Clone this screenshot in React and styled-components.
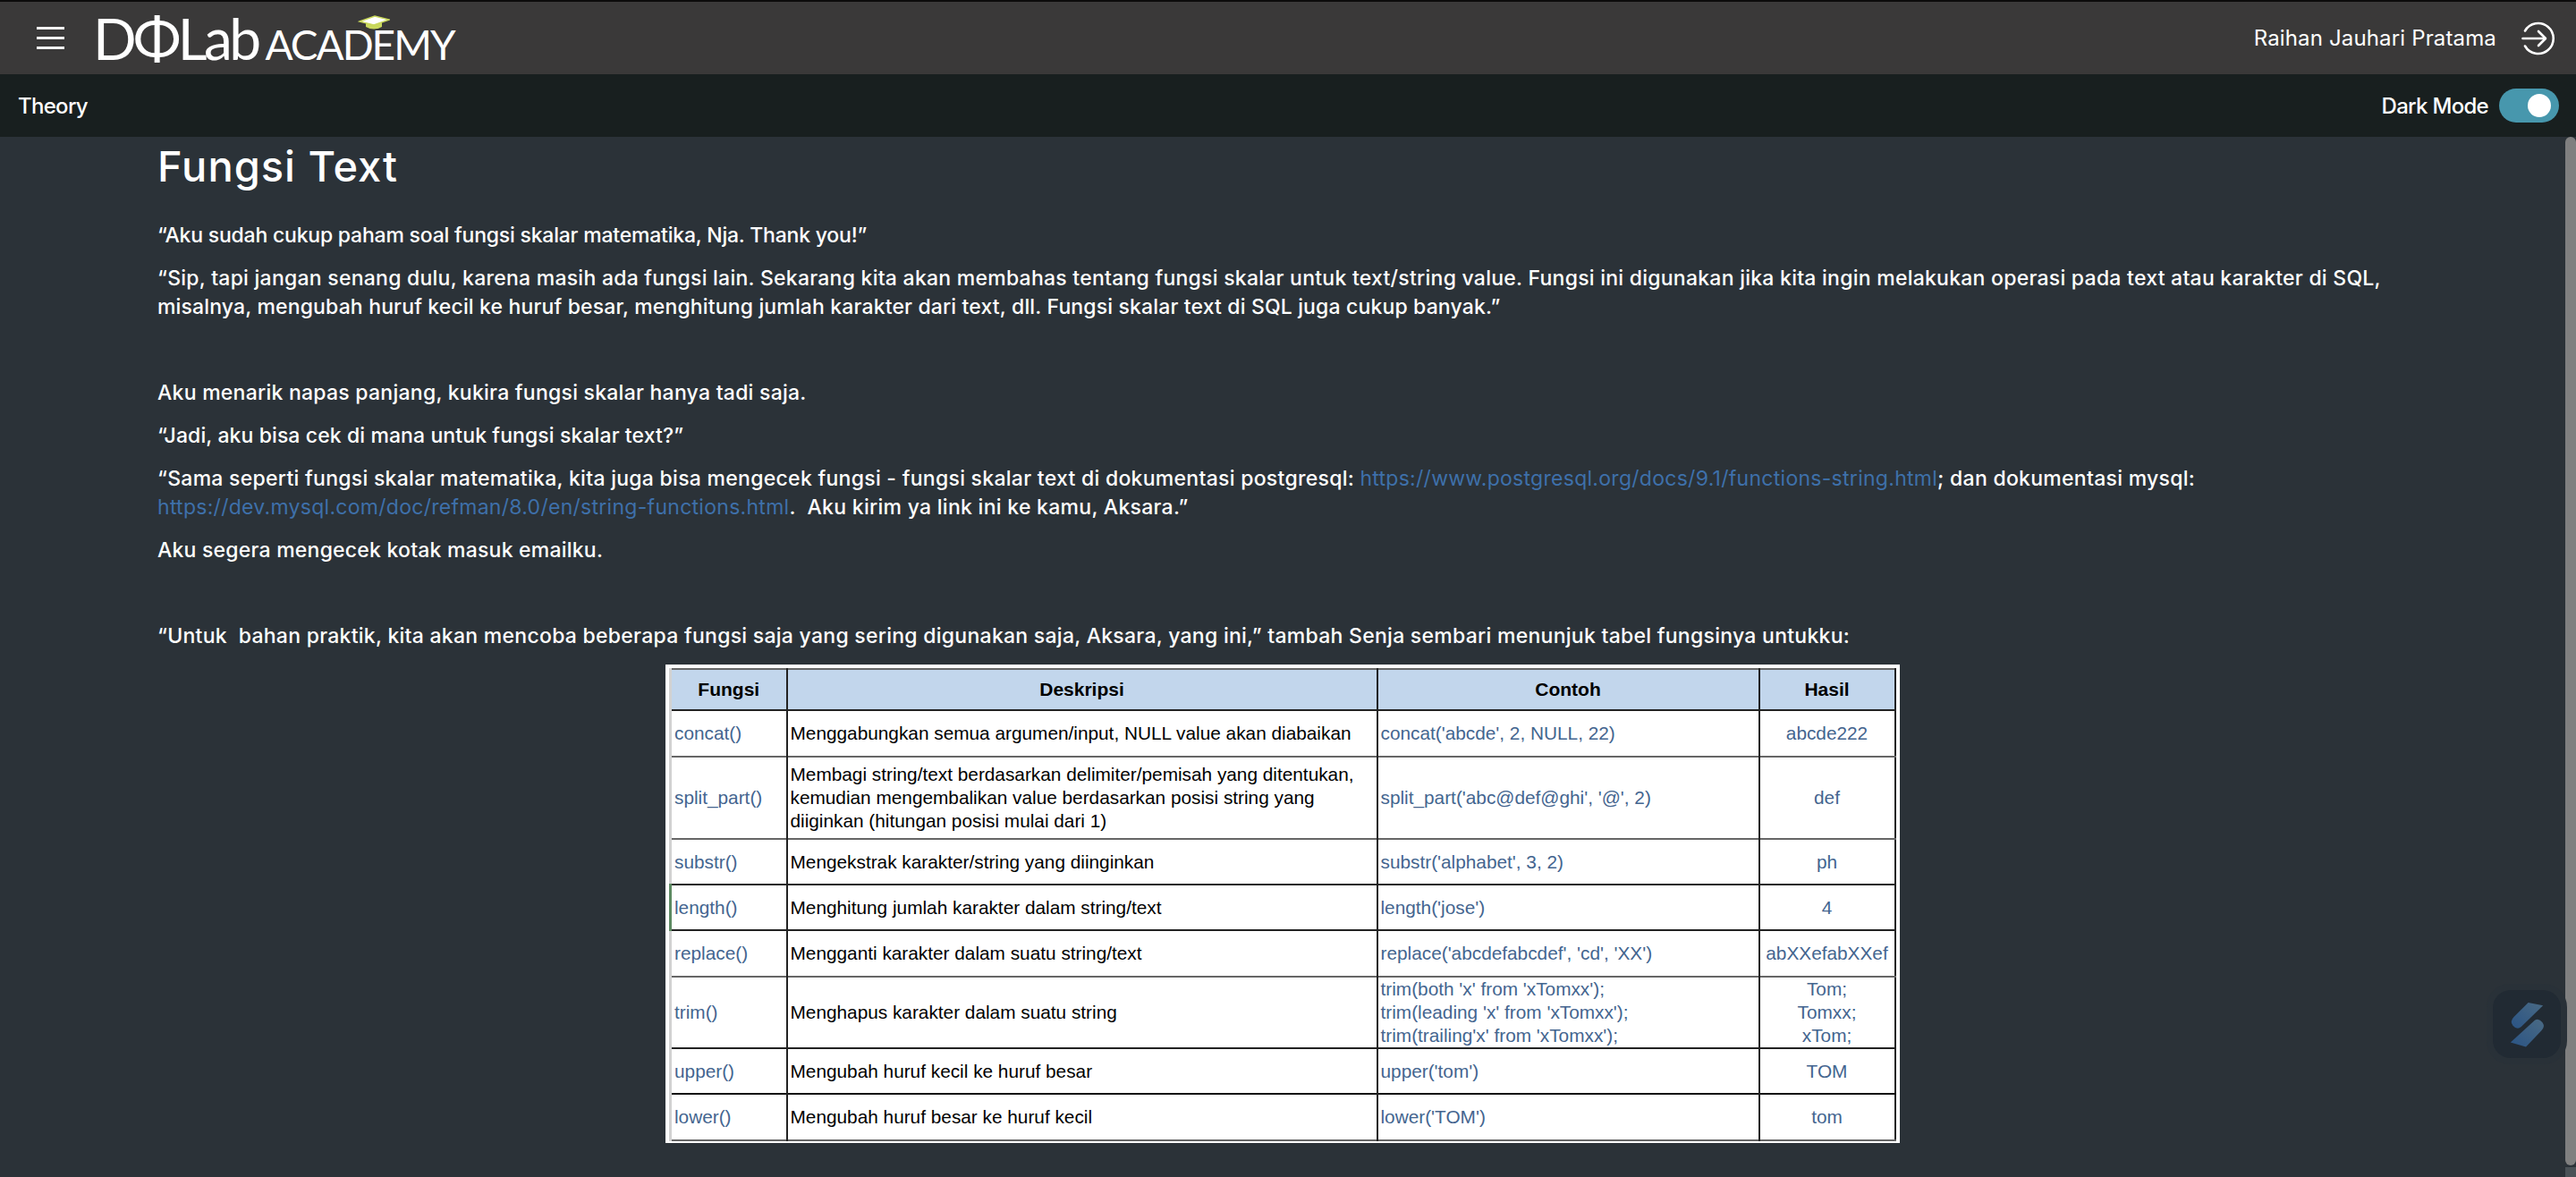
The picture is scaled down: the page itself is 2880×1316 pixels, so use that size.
import React from 'react';
import styled, { createGlobalStyle } from 'styled-components';

const GlobalStyle = createGlobalStyle`
  html, body {
    margin: 0;
    padding: 0;
    height: 100%;
    overflow: hidden;
    background: #2b3238;
    font-family: Inter, "Noto Sans", sans-serif;
  }
`;

const Page = styled.div`
  display: flex;
  flex-direction: column;
  height: 100vh;
`;

const Header = styled.header`
  display: flex;
  align-items: center;
  justify-content: space-between;
  height: 81px;
  flex-shrink: 0;
  border-top: 2px solid #0b0b0b;
  background: #3a3939;
  padding: 0 23px 0 41px;
`;

const HeaderLeft = styled.div`
  display: flex;
  align-items: center;
  gap: 32px;
`;

const Burger = styled.div`
  display: flex;
  flex-direction: column;
  gap: 8px;
  width: 31px;

  span {
    display: block;
    height: 3px;
    background: #f4f4f4;
  }
`;

const Logo = styled.div`
  position: relative;
  display: flex;
  align-items: baseline;
  gap: 8px;
  height: 50px;
  color: #fff;
  font-family: Lato, sans-serif;
  line-height: 50px;
  white-space: nowrap;
`;

const LogoMain = styled.span`
  font-size: 64px;
  letter-spacing: -3.6px;
  font-weight: 400;
`;

const LogoSub = styled.span`
  font-size: 46px;
  letter-spacing: -2px;
  font-weight: 400;
`;

const LogoCap = styled.svg`
  position: absolute;
  left: 296px;
  top: -2px;
`;

const HeaderRight = styled.div`
  display: flex;
  align-items: center;
  gap: 28px;
`;

const UserName = styled.span`
  color: #fff;
  font-size: 24px;
  letter-spacing: 0.15px;
`;

const SubBar = styled.div`
  display: flex;
  align-items: center;
  justify-content: space-between;
  height: 70px;
  flex-shrink: 0;
  background: #181f1f;
  padding: 0 19px 0 20px;
  color: #fff;
  font-size: 24px;
  font-weight: 500;
  letter-spacing: -0.7px;
`;

const ModeGroup = styled.div`
  display: flex;
  align-items: center;
  gap: 12px;
`;

const Toggle = styled.div`
  display: flex;
  align-items: center;
  justify-content: flex-end;
  width: 67px;
  height: 38px;
  padding-right: 9px;
  box-sizing: border-box;
  border-radius: 19px;
  background: #4797ad;

  &::after {
    content: '';
    width: 26px;
    height: 26px;
    border-radius: 50%;
    background: #fff;
  }
`;

const Main = styled.main`
  position: relative;
  flex: 1;
  min-height: 0;
  overflow: hidden;
  background: #2b3238;
`;

const Article = styled.article`
  padding: 0 188px 0 176px;
  color: #fff;
`;

const Title = styled.h1`
  margin: 0;
  padding: 0;
  height: 94px;
  font-size: 47px;
  line-height: 66px;
  font-weight: 500;
  letter-spacing: 1px;
`;

const Para = styled.p`
  margin: 0 0 16px;
  font-size: 23px;
  line-height: 32px;
  font-weight: 500;
  white-space: nowrap;
  letter-spacing: ${(p) => p.$ls || 0}px;
  min-height: 32px;
`;

const Line = styled.span`
  display: block;
  letter-spacing: ${(p) => p.$ls}px;
`;

const Link = styled.a`
  color: #3e70aa;
  font-weight: 400;
`;

const SheetWrap = styled.div`
  display: flex;
  justify-content: center;
`;

const Sheet = styled.div`
  width: 1380px;
  height: 535px;
  box-sizing: border-box;
  padding: 4px 5px 4px 4px;
  background: #fff;
`;

const Table = styled.table`
  width: 1369px;
  border-collapse: collapse;
  table-layout: fixed;
  font-family: "Liberation Sans", Arial, sans-serif;
  font-size: 20.8px;
  line-height: 26px;
  border-left: 3px solid #d2d2d2;
  border-right: 2px solid #222;
  border-top: 2px solid #666;
`;

const Row = styled.tr`
  height: ${(p) => p.$h}px;
  border-bottom: 2px solid ${(p) => p.$line};
`;

const Head = styled.th`
  background: #c2d6ec;
  color: #000;
  font-size: 21px;
  font-weight: 700;
  text-align: center;
  border-left: 2px solid #222;
  border-bottom: 2px solid #222;

  &:first-child {
    border-left: none;
  }
`;

const Cell = styled.td`
  padding: 0 3px;
  color: ${(p) => (p.$blue ? '#44658f' : '#000')};
  text-align: ${(p) => (p.$center ? 'center' : 'left')};
  border-left: 2px solid #222;
  white-space: nowrap;
  vertical-align: middle;

  &:first-child {
    border-left: ${(p) => (p.$green ? '3px solid #5d8a62' : 'none')};
  }
`;

const ScrollThumb = styled.div`
  position: absolute;
  top: 0;
  right: 0;
  width: 12px;
  height: 1150px;
  border-radius: 6px;
  background: #808080;
`;

const ScrollEnd = styled.div`
  position: absolute;
  bottom: 0;
  right: 0;
  width: 12px;
  height: 11px;
  background: #4b5257;
`;

const FloatWrap = styled.div`
  position: absolute;
  top: 947px;
  right: 10px;
  width: 90px;
  height: 90px;
  box-sizing: border-box;
  padding: 7px;
  border-radius: 26px;
  background: #293138;
`;

const FloatInner = styled.div`
  display: flex;
  width: 76px;
  height: 76px;
  border-radius: 20px;
  background: #212a33;
`;

const rows = [
  { h: 52, line: '#666', f: 'concat()', d: 'Menggabungkan semua argumen/input, NULL value akan diabaikan', c: "concat('abcde', 2, NULL, 22)", r: 'abcde222' },
  { h: 92, line: '#666', f: 'split_part()', d: <>Membagi string/text berdasarkan delimiter/pemisah yang ditentukan,<br />kemudian mengembalikan value berdasarkan posisi string yang<br />diiginkan (hitungan posisi mulai dari 1)</>, c: "split_part('abc@def@ghi', '@', 2)", r: 'def' },
  { h: 51, line: '#222', f: 'substr()', d: 'Mengekstrak karakter/string yang diinginkan', c: "substr('alphabet', 3, 2)", r: 'ph' },
  { h: 51, line: '#222', f: 'length()', d: 'Menghitung jumlah karakter dalam string/text', c: "length('jose')", r: '4', green: true },
  { h: 52, line: '#666', f: 'replace()', d: 'Mengganti karakter dalam suatu string/text', c: "replace('abcdefabcdef', 'cd', 'XX')", r: 'abXXefabXXef' },
  { h: 80, line: '#222', f: 'trim()', d: 'Menghapus karakter dalam suatu string', c: <>trim(both 'x' from 'xTomxx');<br />trim(leading 'x' from 'xTomxx');<br />trim(trailing'x' from 'xTomxx');</>, r: <>Tom;<br />Tomxx;<br />xTom;</> },
  { h: 51, line: '#111', f: 'upper()', d: 'Mengubah huruf kecil ke huruf besar', c: "upper('tom')", r: 'TOM' },
  { h: 52, line: '#666', f: 'lower()', d: 'Mengubah huruf besar ke huruf kecil', c: "lower('TOM')", r: 'tom' },
];

function ExitIcon() {
  return (
    <svg width="38" height="38" viewBox="0 0 38 38" fill="none" stroke="#fff" strokeWidth="2.6" strokeLinecap="round" strokeLinejoin="round">
      <path d="M4 10.5a17 17 0 1 1 0 17" />
      <path d="M1.5 19h25" />
      <path d="M19 11l8 8-8 8" />
    </svg>
  );
}

function FloatLogo() {
  return (
    <svg width="76" height="76" viewBox="260 138 230 230">
      <defs>
        <linearGradient id="slash" x1="0" y1="1" x2="1" y2="0">
          <stop offset="0" stopColor="#2a5485" />
          <stop offset="1" stopColor="#4a6a84" />
        </linearGradient>
      </defs>
      <path d="M380 180L430 190L356 262Q342 274 328 258Q316 244 332 228Z" fill="url(#slash)" />
      <path d="M402 240Q416 232 428 248Q438 262 424 276L372 330L320 315Z" fill="url(#slash)" />
    </svg>
  );
}

export default function App() {
  return (
    <Page>
      <GlobalStyle />
      <Header>
        <HeaderLeft>
          <Burger><span /><span /><span /></Burger>
          <Logo>
            <LogoMain>DΦLab</LogoMain>
            <LogoSub>ACADEMY</LogoSub>
            <LogoCap width="36" height="18" viewBox="0 0 36 18">
              <path d="M2 8L19 2L35 6L18 12Z" fill="#fff" stroke="#c9d85c" strokeWidth="1.5" />
              <path d="M9 10V14Q18 19 27 14V9L18 12Z" fill="#c9d85c" />
            </LogoCap>
          </Logo>
        </HeaderLeft>
        <HeaderRight>
          <UserName>Raihan Jauhari Pratama</UserName>
          <ExitIcon />
        </HeaderRight>
      </Header>
      <SubBar>
        <span>Theory</span>
        <ModeGroup>
          <span>Dark Mode</span>
          <Toggle />
        </ModeGroup>
      </SubBar>
      <Main>
        <Article>
          <Title>Fungsi Text</Title>
          <Para $ls={-0.21}>“Aku sudah cukup paham soal fungsi skalar matematika, Nja. Thank you!”</Para>
          <Para>
            <Line $ls={0.25}>“Sip, tapi jangan senang dulu, karena masih ada fungsi lain. Sekarang kita akan membahas tentang fungsi skalar untuk text/string value. Fungsi ini digunakan jika kita ingin melakukan operasi pada text atau karakter di SQL,</Line>
            <Line $ls={0.15}>misalnya, mengubah huruf kecil ke huruf besar, menghitung jumlah karakter dari text, dll. Fungsi skalar text di SQL juga cukup banyak.”</Line>
          </Para>
          <Para />
          <Para $ls={0.25}>Aku menarik napas panjang, kukira fungsi skalar hanya tadi saja.</Para>
          <Para $ls={0.1}>“Jadi, aku bisa cek di mana untuk fungsi skalar text?”</Para>
          <Para $ls={0.28}>“Sama seperti fungsi skalar matematika, kita juga bisa mengecek fungsi - fungsi skalar text di dokumentasi postgresql: <Link>https://www.postgresql.org/docs/9.1/functions-string.html</Link>; dan dokumentasi mysql:<br /><Link>https://dev.mysql.com/doc/refman/8.0/en/string-functions.html</Link>.&nbsp; Aku kirim ya link ini ke kamu, Aksara.”</Para>
          <Para $ls={0.22}>Aku segera mengecek kotak masuk emailku.</Para>
          <Para />
          <Para $ls={0.27}>“Untuk&nbsp; bahan praktik, kita akan mencoba beberapa fungsi saja yang sering digunakan saja, Aksara, yang ini,” tambah Senja sembari menunjuk tabel fungsinya untukku:</Para>
          <SheetWrap>
            <Sheet>
              <Table>
                <colgroup>
                  <col style={{ width: 130 }} />
                  <col style={{ width: 660 }} />
                  <col style={{ width: 427 }} />
                  <col style={{ width: 152 }} />
                </colgroup>
                <thead>
                  <Row $h={46} $line="#222">
                    <Head>Fungsi</Head>
                    <Head>Deskripsi</Head>
                    <Head>Contoh</Head>
                    <Head>Hasil</Head>
                  </Row>
                </thead>
                <tbody>
                  {rows.map((row) => (
                    <Row key={row.f} $h={row.h} $line={row.line}>
                      <Cell $blue $green={row.green}>{row.f}</Cell>
                      <Cell>{row.d}</Cell>
                      <Cell $blue>{row.c}</Cell>
                      <Cell $blue $center>{row.r}</Cell>
                    </Row>
                  ))}
                </tbody>
              </Table>
            </Sheet>
          </SheetWrap>
        </Article>
        <ScrollThumb />
        <ScrollEnd />
        <FloatWrap>
          <FloatInner><FloatLogo /></FloatInner>
        </FloatWrap>
      </Main>
    </Page>
  );
}
